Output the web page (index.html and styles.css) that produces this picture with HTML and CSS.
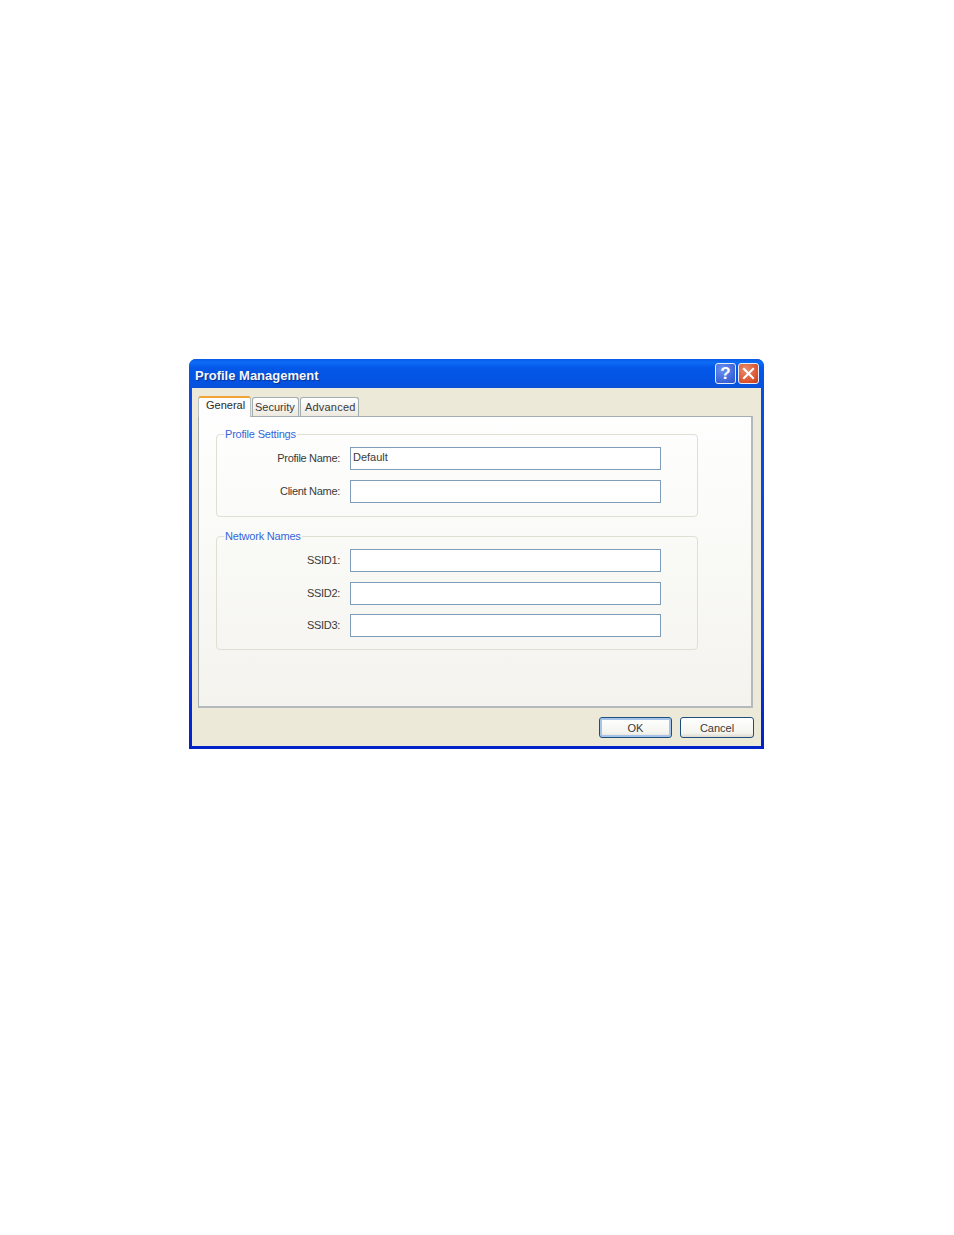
FILE: index.html
```html
<!DOCTYPE html>
<html lang="en">
<head>
    <meta charset="UTF-8">
    <meta name="viewport" content="width=device-width, initial-scale=1.0">
    <title>Profile Management</title>
    <link rel="stylesheet" href="styles.css">
</head>
<body>
    <div class="window">
        <div class="titlebar">
            <span class="title">Profile Management</span>
            <button type="button" class="caption-btn help">?</button>
            <button type="button" class="caption-btn close" aria-label="Close">
                <svg width="13" height="13" viewBox="0 0 13 13"><path d="M2 2 L11 11 M11 2 L2 11" stroke="#fff" stroke-width="2.2" stroke-linecap="square" fill="none"/></svg>
            </button>
        </div>
        <div class="client">
            <div class="tabs">
                <div class="tab active">General</div>
                <div class="tab">Security</div>
                <div class="tab">Advanced</div>
            </div>
            <div class="panel">
                <fieldset class="group group-profile">
                    <legend>Profile Settings</legend>
                    <div class="row">
                        <label for="profileName">Profile Name:</label>
                        <input type="text" id="profileName" value="Default">
                    </div>
                    <div class="row">
                        <label for="clientName">Client Name:</label>
                        <input type="text" id="clientName">
                    </div>
                </fieldset>
                <fieldset class="group group-network">
                    <legend>Network Names</legend>
                    <div class="row">
                        <label for="ssid1">SSID1:</label>
                        <input type="text" id="ssid1">
                    </div>
                    <div class="row">
                        <label for="ssid2">SSID2:</label>
                        <input type="text" id="ssid2">
                    </div>
                    <div class="row">
                        <label for="ssid3">SSID3:</label>
                        <input type="text" id="ssid3">
                    </div>
                </fieldset>
            </div>
            <div class="buttons">
                <button type="button" class="btn default">OK</button>
                <button type="button" class="btn">Cancel</button>
            </div>
        </div>
    </div>
</body>
</html>
```

FILE: styles.css
```css
body {
    margin: 0;
    background: #fff;
    font-family: "Liberation Sans", Arial, sans-serif;
    font-size: 11px;
    color: #3a3a3a;
}

.window {
    box-sizing: border-box;
    width: 575px;
    height: 390px;
    margin: 359px 0 0 189px;
    border-radius: 7px 7px 0 0;
    background: linear-gradient(180deg, #0a4fe0, #0a3ce0 70%, #0022c8);
    display: flex;
    flex-direction: column;
}

.titlebar {
    height: 29px;
    flex: none;
    display: flex;
    align-items: center;
    padding: 0 5px 0 6px;
    border-radius: 7px 7px 0 0;
    background: linear-gradient(180deg, #0a5ae6 0%, #0b6cf6 12%, #0458e8 30%, #0453e2 80%, #0a4fd8 100%);
}

.title {
    flex: 1;
    padding-top: 4px;
    color: #f4f6fc;
    font-size: 13px;
    font-weight: bold;
    text-shadow: 1px 1px 1px #0a2f8c;
}

.caption-btn {
    box-sizing: border-box;
    width: 21px;
    height: 21px;
    margin-left: 2px;
    padding: 0;
    border: 1px solid #e6ecfa;
    border-radius: 3px;
    color: #fff;
    display: flex;
    align-items: center;
    justify-content: center;
}

.help {
    background: radial-gradient(circle at 35% 30%, #6d92ee, #3a63d8 70%, #2c50c4);
    font-size: 17px;
    font-weight: bold;
}

.close {
    background: radial-gradient(circle at 35% 30%, #ea8c6c, #dc5430 65%, #c23a18);
}

.client {
    flex: 1;
    margin: 0 3px 3px;
    background: #ece9d8;
    display: flex;
    flex-direction: column;
    padding: 6px 8px 0 6px;
}

.tabs {
    display: flex;
    align-items: flex-end;
    height: 22px;
    position: relative;
    z-index: 1;
}

.tab {
    box-sizing: border-box;
    height: 19px;
    margin-left: 1px;
    padding: 3px 0 0 4px;
    border: 1px solid #a4adad;
    border-bottom: none;
    border-radius: 3px 3px 0 0;
    background: linear-gradient(180deg, #fff, #ece9e0);
}

.tab:nth-child(2) {
    width: 47px;
    padding-left: 2px;
}

.tab:nth-child(3) {
    width: 59px;
    letter-spacing: 0.2px;
}

.tab.active {
    width: 53px;
    height: 21px;
    margin: 0 0 -1px;
    padding: 1px 0 0 7px;
    border: 1px solid #b9c2c0;
    border-top: 2px solid #f0a436;
    border-bottom: none;
    background: #fdfdfd;
    color: #2a2a2a;
}

.panel {
    box-sizing: border-box;
    height: 292px;
    flex: none;
    border: 1px solid #a4aeb0;
    border-bottom: 2px solid #b4b9bd;
    border-right: 2px solid #b4b9bd;
    background: linear-gradient(180deg, #fefefe 0%, #f9f9f6 50%, #f4f3ee 100%);
    padding: 10px 0 0 17px;
}

.group {
    box-sizing: border-box;
    width: 482px;
    margin: 0;
    padding: 6px 0 0;
    border: 1px solid #e0dfd2;
    border-radius: 4px;
}

.group legend {
    margin-left: 7px;
    padding: 0 1px;
    font-size: 11px;
    line-height: 14px;
    letter-spacing: -0.2px;
    color: #3566dc;
}

.group-profile {
    height: 90px;
}

.group-network {
    height: 121px;
    margin-top: 12px;
}

.row {
    display: flex;
    align-items: center;
    height: 23px;
    margin-bottom: 10px;
}

.row:last-child {
    margin-top: -1px;
}

.group-profile .row:last-child {
    margin-top: 0;
}

.row label {
    width: 123px;
    margin-right: 10px;
    padding-bottom: 2px;
    text-align: right;
    letter-spacing: -0.3px;
}

.row input {
    box-sizing: border-box;
    width: 311px;
    height: 23px;
    margin: 0;
    padding: 0 2px 4px;
    border: 1px solid #7f9db9;
    outline: none;
    background: #fff;
    font-family: inherit;
    font-size: 11px;
    color: #3a3a3a;
}

.buttons {
    display: flex;
    justify-content: flex-end;
    gap: 8px;
    padding: 9px 0 0;
    margin-right: -1px;
}

.btn {
    box-sizing: border-box;
    width: 74px;
    height: 21px;
    padding: 0;
    border: 1px solid #1c4f7e;
    border-radius: 3px;
    background: linear-gradient(180deg, #fff, #f3f3ee 80%, #dcd8cc);
    font-family: inherit;
    font-size: 11px;
    color: #3a3a3a;
}

.btn.default {
    width: 73px;
    box-shadow: inset 0 0 0 2px #a6c4ea;
}
```
